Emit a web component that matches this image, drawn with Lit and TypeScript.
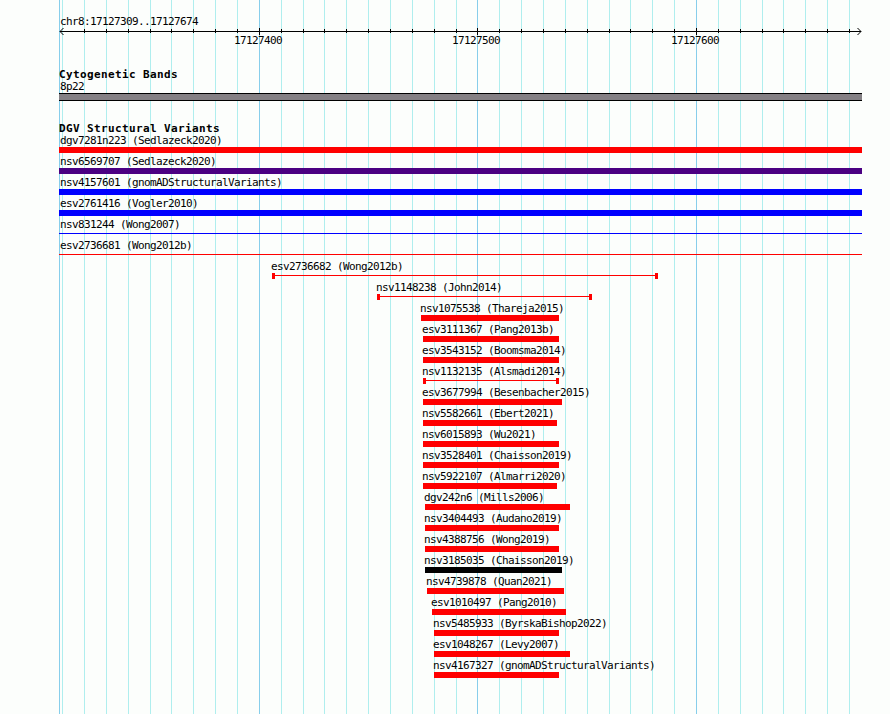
import { LitElement, html, svg, css } from "lit";
import { customElement } from "lit/decorators.js";
import { styleMap } from "lit/directives/style-map.js";

const LEFT = 59;
const RIGHT = 862;

const GRID = [
  62, 84, 106, 128, 150, 171, 193, 215, 237, 259, 281, 303, 324, 346, 368, 390, 412, 434, 456,
  477, 499, 521, 543, 565, 587, 609, 630, 652, 674, 696, 718, 740, 762, 783, 805, 827, 849,
];

const MAJOR: Record<number, string> = { 259: "17127400", 477: "17127500", 696: "17127600" };

type Shape = "bar" | "line" | "span";
type Variant = { name: string; from: number; to: number; color: string; shape: Shape };

const v = (name: string, from: number, to: number, color = "#ff0000", shape: Shape = "bar"): Variant => ({
  name, from, to, color, shape,
});

const VARIANTS: Variant[] = [
  v("dgv7281n223 (Sedlazeck2020)", LEFT, RIGHT),
  v("nsv6569707 (Sedlazeck2020)", LEFT, RIGHT, "#4b0082"),
  v("nsv4157601 (gnomADStructuralVariants)", LEFT, RIGHT, "#0000ff"),
  v("esv2761416 (Vogler2010)", LEFT, RIGHT, "#0000ff"),
  v("nsv831244 (Wong2007)", LEFT, RIGHT, "#0000ff", "line"),
  v("esv2736681 (Wong2012b)", LEFT, RIGHT, "#ff0000", "line"),
  v("esv2736682 (Wong2012b)", 272, 658, "#ff0000", "span"),
  v("nsv1148238 (John2014)", 377, 592, "#ff0000", "span"),
  v("nsv1075538 (Thareja2015)", 421, 559),
  v("esv3111367 (Pang2013b)", 423, 559),
  v("esv3543152 (Boomsma2014)", 423, 559),
  v("nsv1132135 (Alsmadi2014)", 423, 559, "#ff0000", "span"),
  v("esv3677994 (Besenbacher2015)", 423, 562),
  v("nsv5582661 (Ebert2021)", 423, 557),
  v("nsv6015893 (Wu2021)", 423, 559),
  v("nsv3528401 (Chaisson2019)", 423, 559),
  v("nsv5922107 (Almarri2020)", 423, 557),
  v("dgv242n6 (Mills2006)", 425, 570),
  v("nsv3404493 (Audano2019)", 425, 559),
  v("nsv4388756 (Wong2019)", 425, 559),
  v("nsv3185035 (Chaisson2019)", 425, 562, "#000000"),
  v("nsv4739878 (Quan2021)", 427, 564),
  v("esv1010497 (Pang2010)", 432, 566),
  v("nsv5485933 (ByrskaBishop2022)", 434, 559),
  v("esv1048267 (Levy2007)", 434, 570),
  v("nsv4167327 (gnomADStructuralVariants)", 434, 559),
];

@customElement("variant-row")
export class VariantRow extends LitElement {
  static properties = { variant: { attribute: false } };
  declare variant: Variant;

  static styles = css`
    :host {
      display: block;
      height: 21px;
    }
    .label {
      height: 12px;
      line-height: 14px;
      white-space: pre;
      margin-bottom: 1px;
    }
    .glyph {
      box-sizing: border-box;
      height: 6px;
      display: flex;
    }
    .bar {
      background: var(--c);
    }
    .line::before,
    .span::before {
      content: "";
      order: 1;
      flex: 1;
      height: 1px;
      margin-top: 2px;
      background: var(--c);
    }
    .cap {
      width: 3px;
      height: 6px;
      background: var(--c);
    }
    .end {
      order: 2;
    }
  `;

  render() {
    const { name, from, to, color, shape } = this.variant;
    const x = from - LEFT;
    return html`
      <div class="label" style=${styleMap({ marginLeft: `${x ? x - 1 : 1}px` })}>${name}</div>
      <div
        class="glyph ${shape}"
        style=${styleMap({ marginLeft: `${x}px`, width: `${to - from}px`, "--c": color })}
      >
        ${shape === "span" ? html`<span class="cap"></span><span class="cap end"></span>` : null}
      </div>
    `;
  }
}

@customElement("app-root")
export class AppRoot extends LitElement {
  static styles = css`
    :host {
      display: block;
      position: relative;
      width: 890px;
      height: 714px;
      overflow: hidden;
      background: #fcfefc;
      color: #000;
      font-family: "DejaVu Sans Mono", "Liberation Mono", monospace;
      font-size: 11px;
      letter-spacing: -0.622px;
    }
    .grid {
      position: absolute;
      inset: 0;
    }
    .tracks {
      position: relative;
      display: flex;
      flex-direction: column;
      padding: 15px 28px 0 59px;
    }
    .text {
      height: 12px;
      line-height: 14px;
      padding-left: 1px;
      white-space: pre;
    }
    .axis {
      display: block;
      height: 7px;
      margin-top: 1px;
    }
    .numbers {
      display: grid;
      grid-template-columns: 175px 218px 219px 1fr;
      height: 12px;
      line-height: 14px;
      margin-top: -1px;
    }
    .numbers span {
      grid-row: 1;
    }
    .title {
      height: 12px;
      line-height: 14px;
      font-weight: bold;
      letter-spacing: 0.378px;
      white-space: pre;
    }
    .cyto {
      margin-top: 22px;
    }
    .band {
      box-sizing: border-box;
      height: 8px;
      margin-top: 1px;
      background: #848084;
      border: solid #000;
      border-width: 1px 0;
    }
    .dgv {
      margin-top: 21px;
    }
  `;

  render() {
    return html`
      <svg class="grid" width="890" height="714" shape-rendering="crispEdges">
        ${[LEFT, ...GRID].map(
          (x) => svg`<rect x=${x} y="0" width="1" height="714"
            fill=${x === LEFT || MAJOR[x] ? "#87ceeb" : "#afeeee"}></rect>`,
        )}
      </svg>
      <div class="tracks">
        <div class="text">chr8:17127309..17127674</div>
        <svg class="axis" width="803" height="7" viewBox="59 28 803 7">
          <path d="M60 31.5H861" stroke="#000" fill="none"></path>
          <path d="M63.5 28L60 31.5L63.5 35M857.5 28L861 31.5L857.5 35" stroke="#000" fill="none"></path>
          ${GRID.filter((x) => x !== 62).map(
            (x) => svg`<rect x=${x} y=${MAJOR[x] ? 28 : 29} width="1" height=${MAJOR[x] ? 7 : 4}></rect>`,
          )}
        </svg>
        <div class="numbers">
          ${Object.values(MAJOR).map((t, i) => html`<span style=${styleMap({ gridColumn: `${i + 2}` })}>${t}</span>`)}
        </div>
        <div class="title cyto">Cytogenetic Bands</div>
        <div class="text">8p22</div>
        <div class="band"></div>
        <div class="title dgv">DGV Structural Variants</div>
        ${VARIANTS.map((item) => html`<variant-row .variant=${item}></variant-row>`)}
      </div>
    `;
  }
}
